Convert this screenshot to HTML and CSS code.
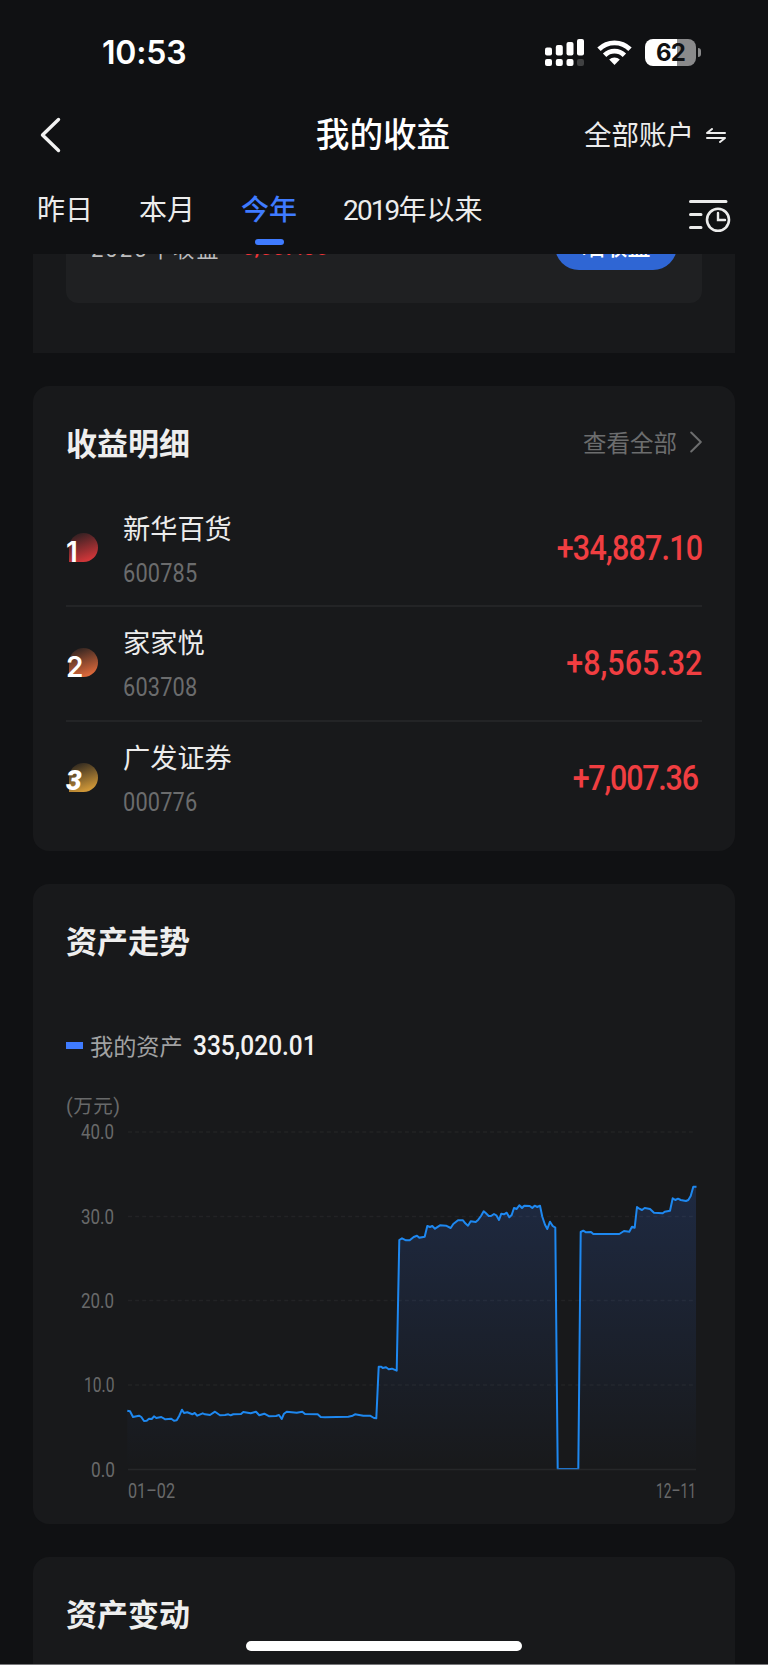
FILE: index.html
```html
<!DOCTYPE html>
<html lang="zh-CN">
<head>
    <meta charset="UTF-8" />
    <meta name="viewport" content="width=device-width, initial-scale=1.0">
    <title>我的收益</title>
    <link rel="stylesheet" href="styles.css">
</head>
<body>

<header>
    <!-- Status bar -->
    <div class="status-bar">
        <span class="time">10:53</span>
        <div class="status-icons">
            <svg class="signal" width="39" height="27" viewBox="0 0 39 27" fill="#fff">
                <rect x="0" y="8.5" width="7" height="8" rx="2"/>
                <rect x="10.8" y="6" width="7" height="10.5" rx="2"/>
                <rect x="21.5" y="3" width="7" height="13.5" rx="2"/>
                <rect x="32" y="0" width="7" height="16.5" rx="2"/>
                <rect x="0" y="20" width="7" height="7" rx="2"/>
                <rect x="10.8" y="20" width="7" height="7" rx="2"/>
                <rect x="21.5" y="20" width="7" height="7" rx="2"/>
                <rect x="32" y="20" width="7" height="7" rx="2" fill="#404142"/>
            </svg>
            <svg class="wifi" width="35" height="25" viewBox="0 0 35 25" fill="none" stroke="#fff" stroke-width="4.8">
                <path d="M2 9.2 A22 22 0 0 1 33 9.2"/>
                <path d="M7.6 15.2 A14 14 0 0 1 27.4 15.2"/>
                <path d="M12.2 19.6 A7.6 7.6 0 0 1 22.8 19.6 L17.5 25 Z" fill="#fff" stroke="none"/>
            </svg>
            <div class="battery"><span>62</span></div>
        </div>
    </div>

    <!-- Title bar -->
    <div class="title-bar">
        <svg class="back" width="21" height="36" viewBox="0 0 21 36" fill="none" stroke="#f2f2f2" stroke-width="3.4" stroke-linecap="round" stroke-linejoin="round">
            <path d="M18.5 2.5 L2.5 18 L18.5 33.5"/>
        </svg>
        <h1>我的收益</h1>
        <div class="account">
            <span>全部账户</span>
            <svg width="20" height="15" viewBox="0 0 20 15" fill="none" stroke="#ececec" stroke-width="2" stroke-linecap="round" stroke-linejoin="round">
                <path d="M19 5 H1 L6 1"/>
                <path d="M1 10 H19 L14 14"/>
            </svg>
        </div>
    </div>

    <!-- Tabs -->
    <nav>
        <a class="tab">昨日</a>
        <a class="tab">本月</a>
        <a class="tab active">今年</a>
        <a class="tab"><span class="year">2019</span>年以来</a>
        <svg class="history" width="42" height="34" viewBox="0 0 42 34" fill="none" stroke="#ececec" stroke-width="3" stroke-linecap="round">
            <path d="M1.5 2.5 H37 M1.5 15.5 H12 M1.5 28.5 H12"/>
            <circle cx="29" cy="20.8" r="11" stroke-width="2.6"/>
            <path d="M29 14 V21 H36" stroke-width="2.4"/>
        </svg>
    </nav>
</header>

<main>
    <!-- Year summary, scrolled under the header -->
    <section class="summary">
        <div class="summary-box">
            <span class="summary-label">2025年收益</span>
            <span class="summary-value">5,557.36</span>
            <a class="share">晒收益</a>
        </div>
    </section>

    <!-- Profit list -->
    <section class="card profit">
        <div class="card-head">
            <h2>收益明细</h2>
            <a class="more">查看全部
                <svg width="12" height="22" viewBox="0 0 12 22" fill="none" stroke="#6c6d6e" stroke-width="2" stroke-linecap="round" stroke-linejoin="round">
                    <path d="M1.2 1.5 L10.8 11 L1.2 20.5"/>
                </svg>
            </a>
        </div>
        <ul>
            <li>
                <div class="rank rank-1"><span>1</span></div>
                <div class="stock">
                    <div class="name">新华百货</div>
                    <div class="code">600785</div>
                </div>
                <div class="amount amount-1">+34,887.10</div>
            </li>
            <li>
                <div class="rank rank-2"><span>2</span></div>
                <div class="stock">
                    <div class="name">家家悦</div>
                    <div class="code">603708</div>
                </div>
                <div class="amount amount-2">+8,565.32</div>
            </li>
            <li>
                <div class="rank rank-3"><span>3</span></div>
                <div class="stock">
                    <div class="name">广发证券</div>
                    <div class="code">000776</div>
                </div>
                <div class="amount amount-3">+7,007.36</div>
            </li>
        </ul>
    </section>

    <!-- Asset trend -->
    <section class="card trend">
        <div class="card-head">
            <h2>资产走势</h2>
        </div>
        <div class="legend">
            <i></i>
            <span>我的资产</span>
            <b>335,020.01</b>
        </div>
        <svg class="chart" width="636" height="420" viewBox="0 0 636 420">
            <defs>
                <linearGradient id="fill" gradientUnits="userSpaceOnUse" x1="0" y1="96" x2="0" y2="379">
                    <stop offset="0" stop-color="#3d7bff" stop-opacity=".17"/>
                    <stop offset="1" stop-color="#3d7bff" stop-opacity="0"/>
                </linearGradient>
            </defs>
            <g class="grid">
                <path d="M62 42 H630"/>
                <path d="M62 126.5 H630"/>
                <path d="M62 210.5 H630"/>
                <path d="M62 295 H630"/>
            </g>
            <path class="area" d="M61.3 379 V320.7 L64 321.3 67 327 73 325.7 78 331 88 326.3 99.3 329.3 110.7 330.3 116 319.7 118 323 131.3 325.7 149 321.7 154 325.3 175 324 190 321.7 198.3 323.7 213 325 215.7 329 220.7 321.7 236.3 321.7 239 324 251.7 324.3 259 327.3 282.3 326.7 289 324.3 304 325.7 310.3 328.3 312.7 276.7 320 277.3 330.7 280.7 333.3 150 343.7 150.3 351 145.7 358.7 146.7 361.3 136 369 138.7 374 135.3 384.7 138 392 130.3 397 130.3 402 135.7 404.7 131.3 409.7 132 417.7 121.3 422.7 126 428 124 433 130 435.3 123.7 440.7 122.7 443.3 127.3 448 118 453.3 115.3 474 115.7 479 134.7 481.3 139 484 131.7 489.3 137.7 491.7 379 512.3 379 514.7 142 525 142 527.3 144 553.3 144 558 141 563.3 141.7 566 136.7 568.7 137.7 571 117 576 120 584 119 588 122.7 596.7 123.3 604 120.7 606.7 108.3 620 111 624.7 106 627.3 96.7 630 96.7 V379 Z"/>
            <polyline class="line" points="61.3,320.7 64,321.3 67,327 73,325.7 75.3,327 78,331 80.7,330.7 83,328.7 85.7,329 88,326.3 90.3,328 95.3,327 99.3,329.3 105.3,328.7 108,330.7 110.7,330.3 113.3,325.7 116,319.7 118,323 121.3,322.3 126.3,324.3 128.7,323 131.3,325.7 136.7,323.3 139,324.3 144,325 149,321.7 154,325.3 159,325 162.3,324.3 164.7,325.3 167.3,324.3 175,324 177.3,322 184.7,323.3 190,321.7 193.3,325.3 198.3,323.7 203.3,326.3 210,326 213,325 215.7,329 218,323.7 220.7,321.7 230.7,322.7 236.3,321.7 239,324 251.7,324.3 254.7,327 259,327.3 282.3,326.7 286.7,325.7 289,324.3 297.3,325.7 304,325.7 308,328 310.3,328.3 312.7,276.7 315.3,276.7 316.7,278 320,277.3 322.7,279.3 326,278.7 330.7,280.7 333.3,150 336,148.3 340,150.3 343.7,150.3 347.7,147 351,145.7 353.3,147.7 358.7,146.7 361.3,136 364,137 366.3,136 369,138.7 374,135.3 380,135.7 384.7,138 387.3,134 392,130.3 397,130.3 399.3,133.3 402,135.7 404.7,131.3 409.7,132 412.3,129.7 415,126 417.7,121.3 420,123.3 422.7,126 425,126 428,124 430.3,125.3 433,130 435.3,123.7 438,124.3 440.7,122.7 443.3,127.3 445.7,125 448,118 450.7,119 453.3,115.3 456,118 458.3,115.7 463.7,116 466.3,118 468.7,115.7 471.3,117 474,115.7 476.3,126.7 479,134.7 481.3,139 484,131.7 486.7,136 489.3,137.7 491.7,379 512.3,379 514.7,142 517.3,140.7 520,142.3 525,142 527.3,144 553.3,144 558,141 563.3,141.7 566,136.7 568.7,137.7 571,117 573.3,118.7 576,120 578.7,118 584,119 588,122.7 596.7,123.3 598.7,121.7 604,120.7 606.7,108.3 609.3,110 612,108.7 614.7,110 620,111 622.3,110 624.7,106 627.3,96.7 630.5,96.7"/>
            <path class="axis" d="M62 379.5 H630"/>
            <g class="labels">
                <text class="unit" x="0" y="23" textLength="54">(万元)</text>
                <text x="15" y="49" textLength="33" lengthAdjust="spacingAndGlyphs">40.0</text>
                <text x="15" y="133.5" textLength="33" lengthAdjust="spacingAndGlyphs">30.0</text>
                <text x="15" y="217.5" textLength="33" lengthAdjust="spacingAndGlyphs">20.0</text>
                <text x="18" y="302" textLength="30.5" lengthAdjust="spacingAndGlyphs">10.0</text>
                <text x="25" y="386.5" textLength="24" lengthAdjust="spacingAndGlyphs">0.0</text>
                <text x="62" y="408" textLength="47" lengthAdjust="spacingAndGlyphs">01–02</text>
                <text x="590" y="408" textLength="40" lengthAdjust="spacingAndGlyphs">12–11</text>
            </g>
        </svg>
    </section>

    <!-- Asset changes -->
    <section class="card changes">
        <div class="card-head">
            <h2>资产变动</h2>
        </div>
    </section>
</main>

<div class="home-indicator"></div>

</body>
</html>
```

FILE: styles.css
```css
/* Base Styles */
* {
    margin: 0;
    padding: 0;
    box-sizing: border-box;
}

body {
    height: 1665px;
    overflow: hidden;
    background: #101113;
    color: #ececec;
    font-family: Roboto, "Noto Sans CJK SC", sans-serif;
    border-bottom: 1px solid #77777a;
}

ul {
    list-style: none;
}

svg {
    display: block;
    flex: none;
}

/* Header */
header {
    height: 254px;
}

.status-bar {
    display: flex;
    justify-content: space-between;
    align-items: center;
    height: 104px;
    padding: 0 72px 0 102px;
}

.time {
    font: 600 32px Inter, sans-serif;
    letter-spacing: -.2px;
    color: #fff;
}

.status-icons {
    display: flex;
    align-items: center;
}

.wifi {
    margin: 0 13px 0 13px;
}

.battery {
    position: relative;
    width: 51px;
    height: 27px;
    border-radius: 8px;
    background: linear-gradient(to right, #fff 62%, #8a8a8b 62%);
    color: #101113;
    font: 700 24px/27px Inter, sans-serif;
    text-align: center;
    letter-spacing: -.8px;
}

.battery::after {
    content: "";
    position: absolute;
    right: -5px;
    top: 9px;
    width: 3px;
    height: 9px;
    border-radius: 0 4px 4px 0;
    background: #8a8a8b;
}

.title-bar {
    display: grid;
    grid-template-columns: 1fr auto 1fr;
    align-items: center;
    height: 62px;
    padding: 0 42px 0 40px;
}

.title-bar h1 {
    padding-top: 2px;
    font-size: 33.6px;
    font-weight: 500;
    line-height: 58px;
    color: #fff;
}

.account {
    display: flex;
    justify-content: flex-end;
    align-items: center;
    gap: 12px;
    font-size: 27.5px;
    line-height: 40px;
}

.account span {
    margin-top: 2px;
}

nav {
    display: flex;
    align-items: flex-start;
    height: 88px;
    padding: 23px 37px 0 37px;
}

.tab {
    position: relative;
    margin-right: 46px;
    font-size: 28px;
    line-height: 44px;
    white-space: nowrap;
}

.tab.active {
    color: #3f7bff;
    font-weight: 500;
}

.tab.active::after {
    content: "";
    position: absolute;
    left: 50%;
    top: 50px;
    width: 29px;
    height: 6px;
    margin-left: -14px;
    border-radius: 3px;
    background: #3f7bff;
}

.year {
    letter-spacing: -1.9px;
}

.history {
    margin: 10px 0 0 auto;
}

/* Summary */
main {
    height: 1410px;
    padding: 0 33px;
    overflow: hidden;
}

.summary {
    height: 99px;
    padding: 0 33px;
    overflow: hidden;
    background: #18191b;
}

.summary-box {
    display: flex;
    align-items: center;
    height: 112px;
    margin-top: -63px;
    padding: 0 25px;
    border-radius: 12px;
    background: #1f2022;
}

.summary-label {
    width: 151px;
    font-size: 22px;
    letter-spacing: 2px;
    color: #bdbdbe;
}

.summary-value {
    font-size: 22px;
    font-weight: 500;
    color: #f03437;
}

.share {
    width: 122px;
    height: 48px;
    margin: -2px 0 0 auto;
    border-radius: 24px;
    background: #2f66d4;
    color: #fff;
    font-size: 23px;
    font-weight: 500;
    line-height: 51px;
    text-align: center;
}

/* Cards */
.card {
    margin-top: 33px;
    padding: 0 33px;
    border-radius: 16px;
    background: #18191b;
}

.card-head {
    display: flex;
    justify-content: space-between;
    align-items: center;
    height: 111px;
}

.card-head h2 {
    font-size: 31px;
    font-weight: 700;
    color: #eee;
}

.more {
    display: flex;
    align-items: center;
    gap: 13px;
    font-size: 23.5px;
    color: #6c6d6e;
}

/* Profit list */
.profit {
    height: 465px;
}

.profit ul {
    margin-top: -7px;
}

.profit li {
    display: flex;
    align-items: center;
    height: 115px;
}

.profit li + li {
    border-top: 2px solid #232426;
}

.rank {
    position: relative;
    width: 29px;
    height: 29px;
    margin: 0 25px 0 3px;
    border-radius: 50% 50% 50% 0;
}

.profit li + li .rank {
    margin-top: -2px;
}

.rank span {
    position: absolute;
    left: -3px;
    bottom: -1px;
    color: #fff;
    font: 600 28px/22px Inter, sans-serif;
}

.rank-1 {
    background: linear-gradient(160deg, #2a1f21 5%, #cf3639 85%);
}

.rank-2 {
    background: linear-gradient(160deg, #2a2220 5%, #d9673a 85%);
}

.rank-3 {
    background: linear-gradient(160deg, #29241f 5%, #cf9738 85%);
}

.rank-3 span {
    font: italic 900 28px/24px Roboto, sans-serif;
}

.stock {
    padding-top: 7px;
}

.profit li + li .stock {
    padding-top: 4px;
}

.name {
    font-size: 27.2px;
    line-height: 44px;
}

.code {
    margin-top: 1px;
    font-size: 25px;
    line-height: 42px;
    letter-spacing: .2px;
    color: #6b6c6d;
    transform: scaleX(.87);
    transform-origin: left;
}

.amount {
    margin: 2px 0 0 auto;
    font-size: 35px;
    font-weight: 500;
    color: #f03e41;
    transform: scaleX(.87);
    transform-origin: right;
}

.amount-1 {
    letter-spacing: -.9px;
}

.amount-2 {
    margin-top: 0;
}

.amount-3 {
    margin-top: 0;
    margin-right: 4px;
    letter-spacing: -1.4px;
}

/* Asset trend */
.trend {
    height: 640px;
}

.trend .card-head {
    height: 111px;
}

.legend {
    display: flex;
    align-items: center;
    height: 40px;
    margin-top: 30px;
    font-size: 23.2px;
    color: #a0a1a2;
}

.legend i {
    width: 17px;
    height: 7px;
    margin-right: 7px;
    background: #3f7bff;
}

.legend span {
    margin-top: -1px;
}

.legend b {
    margin-left: 10px;
    font-size: 28.5px;
    font-weight: 500;
    color: #f2f2f2;
    transform: scaleX(.86);
    transform-origin: left;
}

.chart {
    margin-top: 25px;
}

.grid path {
    stroke: #222325;
    stroke-width: 1.5;
    stroke-dasharray: 4 3.1;
}

.axis {
    stroke: #2a2b2d;
    stroke-width: 1.5;
    stroke-opacity: .8;
}

.area {
    fill: url(#fill);
}

.line {
    fill: none;
    stroke: #1e88f0;
    stroke-width: 2;
    stroke-linejoin: round;
}

.labels text {
    font-size: 20px;
    fill: #68696a;
}

.labels .unit {
    font-size: 19.5px;
}

/* Asset changes */
.changes {
    height: 300px;
}

.home-indicator {
    position: fixed;
    left: 246px;
    bottom: 14px;
    width: 276px;
    height: 10px;
    border-radius: 5px;
    background: #fff;
}
```
